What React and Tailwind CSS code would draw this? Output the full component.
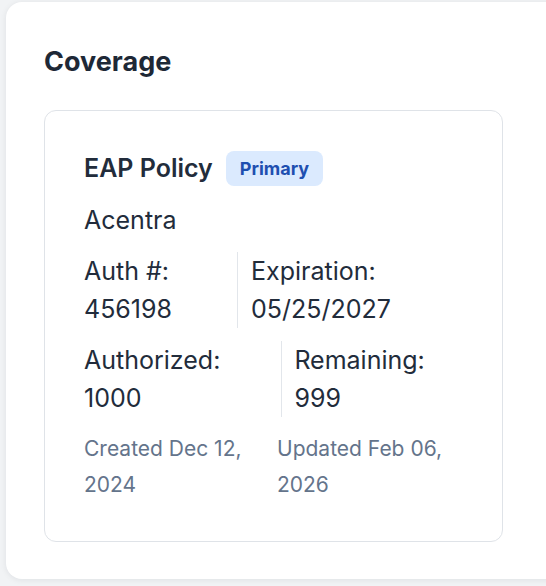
export default function App() {
  const font = { fontFamily: 'Inter, "Noto Sans", sans-serif' };
  return (
    <div className="min-h-[586px] w-[546px] overflow-hidden bg-[#f1f3f5] pl-[6px] pt-[2px]" style={font}>
      <div className="w-[600px] rounded-2xl bg-white pb-[37px] pl-[38px] pt-[42px] shadow-[0_1px_6px_rgba(15,23,42,0.08)]">
        <h2 className="text-[27px] font-bold leading-[36px] text-[#1e2836]">Coverage</h2>
        <div className="mt-[30px] w-[459px] rounded-xl border border-[#dfe3e8] px-[39px] pb-[38px] pt-[40px] text-[#222c3b]">
          <div className="flex h-[35px] items-center gap-[13px]">
            <span className="text-[25px] font-semibold leading-none">EAP Policy</span>
            <span className="flex h-[35px] items-center rounded-lg bg-[#dbeafe] px-[14px] text-[18px] font-bold text-[#1e4fb0]">
              Primary
            </span>
          </div>
          <div className="mt-[16px] text-[25px] leading-[36px]">Acentra</div>
          <div className="mt-[14px] flex text-[25px] leading-[38px]">
            <div className="border-r border-[#e2e6eb] pr-[65px]">
              <div>Auth #:</div>
              <div>456198</div>
            </div>
            <div className="pl-[13px]">
              <div>Expiration:</div>
              <div>05/25/2027</div>
            </div>
          </div>
          <div className="mt-[13px] flex text-[25px] leading-[38px]">
            <div className="border-r border-[#e2e6eb] pr-[61px]">
              <div>Authorized:</div>
              <div>1000</div>
            </div>
            <div className="pl-[12px]">
              <div>Remaining:</div>
              <div>999</div>
            </div>
          </div>
          <div className="mt-[14px] flex gap-4 text-[21px] leading-[36px] text-[#64748b]">
            <div className="w-[177px]">Created Dec 12, 2024</div>
            <div className="w-[177px]">Updated Feb 06, 2026</div>
          </div>
        </div>
      </div>
    </div>
  );
}
